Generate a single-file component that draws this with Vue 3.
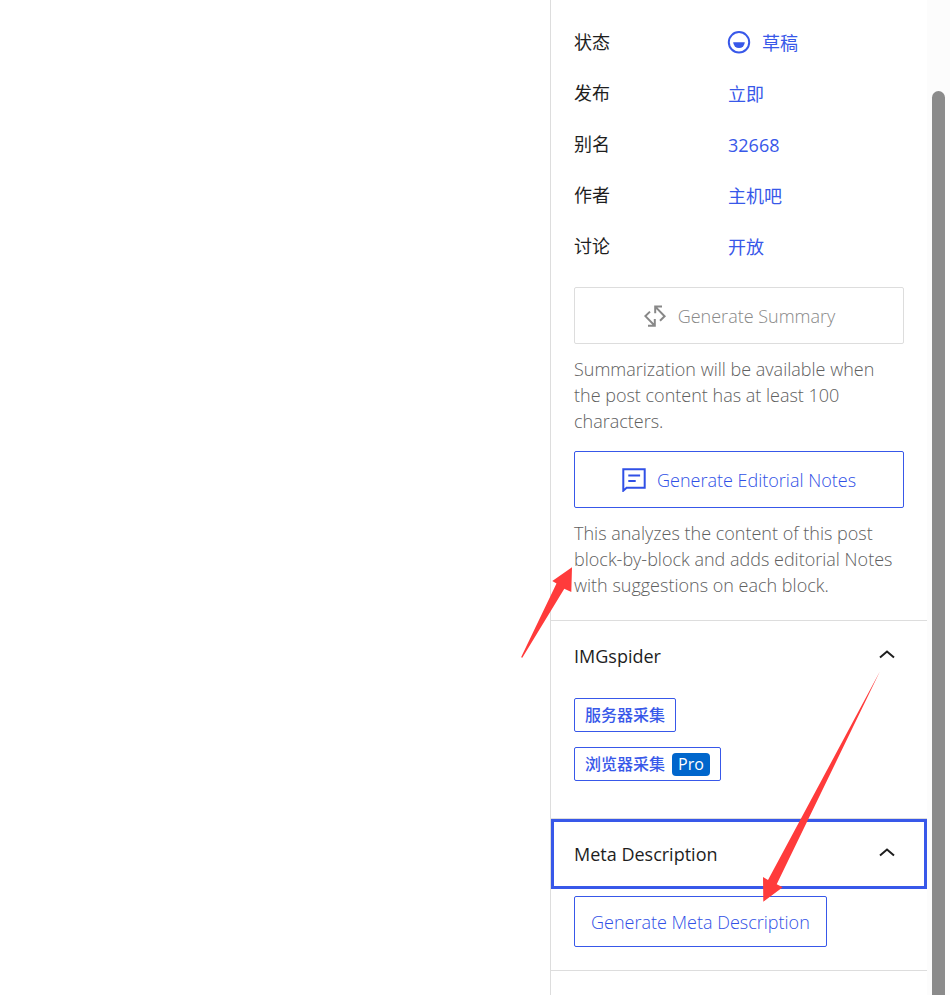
<template>
  <div class="editor">
    <main class="canvas"></main>

    <aside class="sidebar">
      <div class="settings">
        <section class="summary">
          <dl class="rows">
            <div v-for="row in rows" :key="row.label" class="row">
              <dt>{{ row.label }}</dt>
              <dd>
                <button type="button" class="link-button">
                  <svg v-if="row.draft" class="draft-icon" viewBox="0 0 22 22" aria-hidden="true">
                    <circle cx="11" cy="10.3" r="10.2" fill="none" stroke="currentColor" stroke-width="2" />
                    <path d="M5.2 10.3h11.6a5.8 5.8 0 0 1-11.6 0z" fill="currentColor" />
                  </svg>
                  {{ row.value }}
                </button>
              </dd>
            </div>
          </dl>

          <button type="button" class="action" disabled>
            <svg class="icon" viewBox="0 0 24 24" aria-hidden="true">
              <path d="M19 2.6H12.2v6.6M12.2 2.6l9.4 9.6-4.6 4.5M5 21.7h6.8v-6.6M11.8 21.7l-9.4-9.6L7 7.6" />
            </svg>
            Generate Summary
          </button>
          <p class="help">Summarization will be available when the post content has at least 100 characters.</p>

          <button type="button" class="action">
            <svg class="icon" viewBox="0 0 24 24" aria-hidden="true">
              <path d="M1.3 1.2h21.4v18.6H4.6l-3.3 2.9zM6.3 7.6h11.8M6.3 12.9h7.4" />
            </svg>
            Generate Editorial Notes
          </button>
          <p class="help">This analyzes the content of this post block-by-block and adds editorial Notes with suggestions on each block.</p>
        </section>

        <section class="panel">
          <h2>
            <button type="button" class="panel-toggle" aria-expanded="true">
              IMGspider
              <svg class="chevron" viewBox="0 0 16 14" aria-hidden="true"><path d="M1 8.6l7-6 7 6" /></svg>
            </button>
          </h2>
          <div class="panel-body collectors">
            <button type="button" class="small-button">服务器采集</button>
            <button type="button" class="small-button">浏览器采集<span class="pro">Pro</span></button>
          </div>
        </section>

        <section class="panel">
          <h2>
            <button type="button" class="panel-toggle focused" aria-expanded="true">
              Meta Description
              <svg class="chevron" viewBox="0 0 16 14" aria-hidden="true"><path d="M1 8.6l7-6 7 6" /></svg>
            </button>
          </h2>
          <div class="panel-body">
            <button type="button" class="meta-button">Generate Meta Description</button>
          </div>
        </section>
        <div class="panel"></div>
      </div>

      <div class="scrollbar"><div class="thumb"></div></div>

      <!-- 红色箭头标注 -->
      <svg class="arrows" viewBox="0 0 400 920" aria-hidden="true">
        <path d="M22 567.3L2.3 581l4.2 2.4-35.4 73.9 1.2.4 42-69 7 3.3z" />
        <path d="M330 671.3L218 880l-5-3 .3 24.7 19.4-14.4-6-3z" />
      </svg>
    </aside>
  </div>
</template>

<script setup>
const rows = [
  { label: '状态', value: '草稿', draft: true },
  { label: '发布', value: '立即' },
  { label: '别名', value: '32668' },
  { label: '作者', value: '主机吧' },
  { label: '讨论', value: '开放' },
]
</script>

<style>
body {
  margin: 0;
  background: #fff;
}
</style>

<style scoped>
.editor {
  display: flex;
  min-height: 100vh;
  color: #1e1e1e;
  font-family: "Open Sans", "Noto Sans CJK SC", sans-serif;
  font-size: 18px;
  line-height: 26px;
}

.canvas {
  flex: 1;
}

.sidebar {
  position: relative;
  display: flex;
  box-sizing: border-box;
  width: 400px;
  border-left: 1px solid #ddd;
}

.settings {
  flex: 1;
  min-width: 0;
}

button {
  box-sizing: border-box;
  font: inherit;
  cursor: pointer;
}

.summary {
  padding: 18px 23px 22px;
}

.rows {
  display: flex;
  flex-direction: column;
  gap: 3px;
  margin: 0 0 17px;
}

.row {
  display: grid;
  grid-template-columns: 154px 1fr;
  align-items: center;
  height: 48px;
}

dd {
  margin: 0;
}

.link-button {
  display: flex;
  align-items: center;
  gap: 12px;
  padding: 2px 0 0;
  border: 0;
  background: none;
  color: #3858e9;
}

.draft-icon {
  width: 22px;
  height: 22px;
  overflow: visible;
}

.action,
.help,
.meta-button {
  font-weight: 300;
}

.action {
  display: flex;
  align-items: center;
  justify-content: center;
  gap: 11px;
  width: 100%;
  height: 57px;
  border: 1px solid #3858e9;
  border-radius: 2px;
  background: #fff;
  color: #3050e6;
}

.action:disabled {
  border-color: #ddd;
  color: #888;
  cursor: default;
}

.icon {
  width: 24px;
  height: 24px;
  fill: none;
  stroke: currentColor;
  stroke-width: 2;
}

.help {
  margin: 12px 0 17px;
  color: #606060;
}

.help:last-child {
  margin-bottom: 0;
}

.panel {
  border-top: 1px solid #ddd;
}

h2 {
  margin: 0;
  font-size: 18px;
  font-weight: 400;
}

.panel-toggle {
  display: flex;
  align-items: center;
  justify-content: space-between;
  width: 100%;
  height: 70px;
  padding: 0 32px 0 23px;
  border: 0;
  background: none;
  color: #1e1e1e;
}

.focused {
  box-shadow: inset 0 0 0 3px #3858e9;
}

.chevron {
  width: 16px;
  height: 14px;
  fill: none;
  stroke: currentColor;
  stroke-width: 2;
}

.panel-body {
  padding: 7px 23px 23px;
}

.collectors {
  display: flex;
  flex-direction: column;
  align-items: flex-start;
  gap: 15px;
  padding-bottom: 37px;
}

.small-button {
  display: flex;
  align-items: center;
  gap: 7px;
  height: 34px;
  padding: 0 10px;
  border: 1px solid #3858e9;
  border-radius: 2px;
  background: #fff;
  color: #3858e9;
  font-size: 16px;
  font-weight: 500;
}

.pro {
  padding: 0 6px;
  border-radius: 4px;
  background: #06c;
  color: #fff;
  font-weight: 400;
  line-height: 23px;
}

.meta-button {
  height: 51px;
  padding: 0 16px;
  border: 1px solid #3858e9;
  border-radius: 2px;
  background: #fff;
  color: #3050e6;
}

.scrollbar {
  display: flex;
  justify-content: center;
  width: 23px;
  box-sizing: border-box;
  padding: 91px 5px 0;
  background: #fcfcfc;
}

.thumb {
  flex: 1;
  border-radius: 7px 7px 0 0;
  background: #8b8b8b;
}

.arrows {
  position: absolute;
  top: 0;
  left: -1px;
  width: 400px;
  height: 920px;
  overflow: visible;
  fill: #ff3b3b;
  pointer-events: none;
}
</style>
